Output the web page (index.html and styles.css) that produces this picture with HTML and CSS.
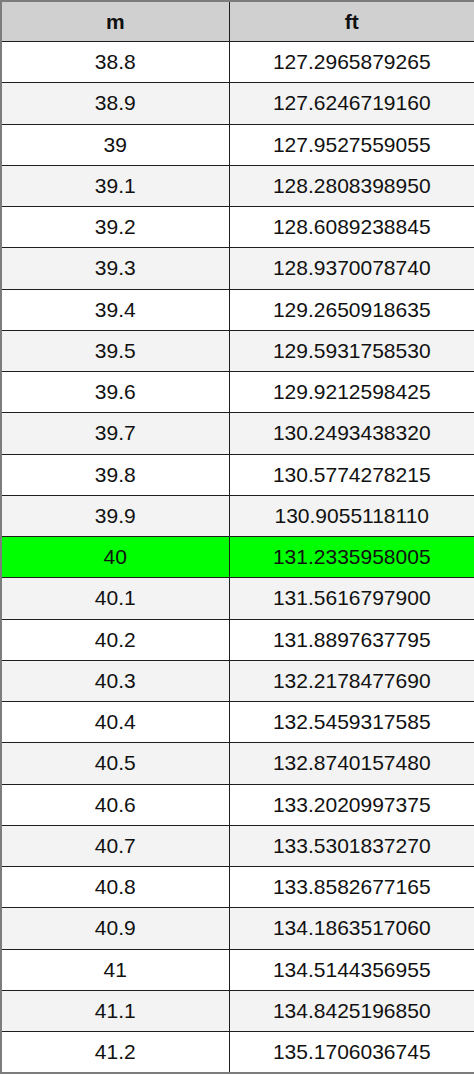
FILE: index.html
```html
<!DOCTYPE html>
<html>
<head>
<meta charset="utf-8">
<link rel="stylesheet" href="styles.css">
</head>
<body>
<table class="conv">
<colgroup><col class="c1"><col class="c2"></colgroup>
<thead>
<tr><th>m</th><th>ft</th></tr>
</thead>
<tbody>
<tr><td>38.8</td><td>127.2965879265</td></tr>
<tr><td>38.9</td><td>127.6246719160</td></tr>
<tr><td>39</td><td>127.9527559055</td></tr>
<tr><td>39.1</td><td>128.2808398950</td></tr>
<tr><td>39.2</td><td>128.6089238845</td></tr>
<tr><td>39.3</td><td>128.9370078740</td></tr>
<tr><td>39.4</td><td>129.2650918635</td></tr>
<tr><td>39.5</td><td>129.5931758530</td></tr>
<tr><td>39.6</td><td>129.9212598425</td></tr>
<tr><td>39.7</td><td>130.2493438320</td></tr>
<tr><td>39.8</td><td>130.5774278215</td></tr>
<tr><td>39.9</td><td>130.9055118110</td></tr>
<tr class="hl"><td>40</td><td>131.2335958005</td></tr>
<tr><td>40.1</td><td>131.5616797900</td></tr>
<tr><td>40.2</td><td>131.8897637795</td></tr>
<tr><td>40.3</td><td>132.2178477690</td></tr>
<tr><td>40.4</td><td>132.5459317585</td></tr>
<tr><td>40.5</td><td>132.8740157480</td></tr>
<tr><td>40.6</td><td>133.2020997375</td></tr>
<tr><td>40.7</td><td>133.5301837270</td></tr>
<tr><td>40.8</td><td>133.8582677165</td></tr>
<tr><td>40.9</td><td>134.1863517060</td></tr>
<tr><td>41</td><td>134.5144356955</td></tr>
<tr><td>41.1</td><td>134.8425196850</td></tr>
<tr><td>41.2</td><td>135.1706036745</td></tr>
</tbody>
</table>
</body>
</html>
```
FILE: styles.css
```css
html, body {
  margin: 0;
  padding: 0;
  background: #ffffff;
}
.conv {
  width: 474px;
  table-layout: fixed;
  border-collapse: collapse;
  border: 2px solid #7c7c7c;
  font-family: "Liberation Sans", Arial, sans-serif;
  font-size: 21px;
  color: #111111;
}
.c1 { width: 228px; }
.c2 { width: 246px; }
.conv th, .conv td {
  border: 1px solid #1e1e1e;
  padding: 0;
  text-align: center;
  vertical-align: middle;
}
.conv th {
  background: #d0d0d0;
  font-weight: bold;
  height: 39px;
  line-height: 39px;
}
.conv td {
  height: 40.25px;
  line-height: 40.25px;
}
.conv tbody tr:nth-child(odd) td { background: #ffffff; }
.conv tbody tr:nth-child(even) td { background: #f3f3f3; }
.conv tbody tr.hl td { background: #00ff00; }
```
